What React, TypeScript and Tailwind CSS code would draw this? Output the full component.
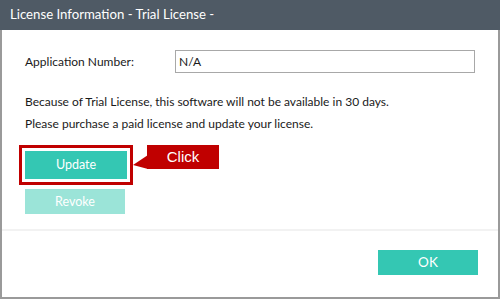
export default function App() {
    return (
        <div
            className="w-[500px] h-[299px] flex flex-col bg-white text-[#1a1a1a]"
            style={{ fontFamily: 'Lato, "Noto Sans", sans-serif' }}
        >
            <div className="h-[30px] shrink-0 bg-[#4f5a65] flex items-center pl-[10px] text-white text-[13.2px]">
                License Information - Trial License -
            </div>
            <div className="flex-1 flex flex-col border-x-2 border-b-2 border-[#9a9a9a]">
                <div className="flex flex-col pl-[23px] pt-[20px] h-[199px]">
                    <div className="flex items-center h-[23px] text-[12px]">
                        <span className="w-[150px]">Application Number:</span>
                        <div className="w-[300px] h-[23px] border border-[#a8a8a8] flex items-center px-[3px]">
                            N/A
                        </div>
                    </div>
                    <div className="mt-[18px] flex flex-col text-[12px] leading-[22px]">
                        <p>Because of Trial License, this software will not be available in 30 days.</p>
                        <p>Please purchase a paid license and update your license.</p>
                    </div>
                    <div className="mt-[10px] ml-[-6px] relative w-[114px]">
                        <div className="border-[3px] border-[#c00000] p-[3px]">
                            <button className="w-[102px] h-[28px] bg-[#34c7b3] text-white text-[12.5px]">
                                Update
                            </button>
                        </div>
                        <div className="absolute left-[128px] top-0 w-[72px] h-[24px] bg-[#c00000] text-white flex items-center justify-center text-[15px]" style={{ fontFamily: '"Liberation Sans", Arial, sans-serif' }}>
                            Click
                        </div>
                        <svg className="absolute left-[114px] top-[8px]" width="15" height="16" viewBox="0 0 15 16">
                            <polygon points="15,2 0,12 15,16" fill="#c00000" />
                        </svg>
                    </div>
                    <button className="mt-[4px] w-[100px] h-[25px] bg-[#9be4d8] text-white text-[12.5px]">
                        Revoke
                    </button>
                </div>
                <div className="h-[2px] bg-[#f2f2f2]" />
                <div className="flex-1 flex justify-end items-start pt-[19px] pr-[20px]">
                    <button className="w-[100px] h-[25px] bg-[#34c7b3] text-white text-[13.5px]">
                        OK
                    </button>
                </div>
            </div>
        </div>
    );
}
